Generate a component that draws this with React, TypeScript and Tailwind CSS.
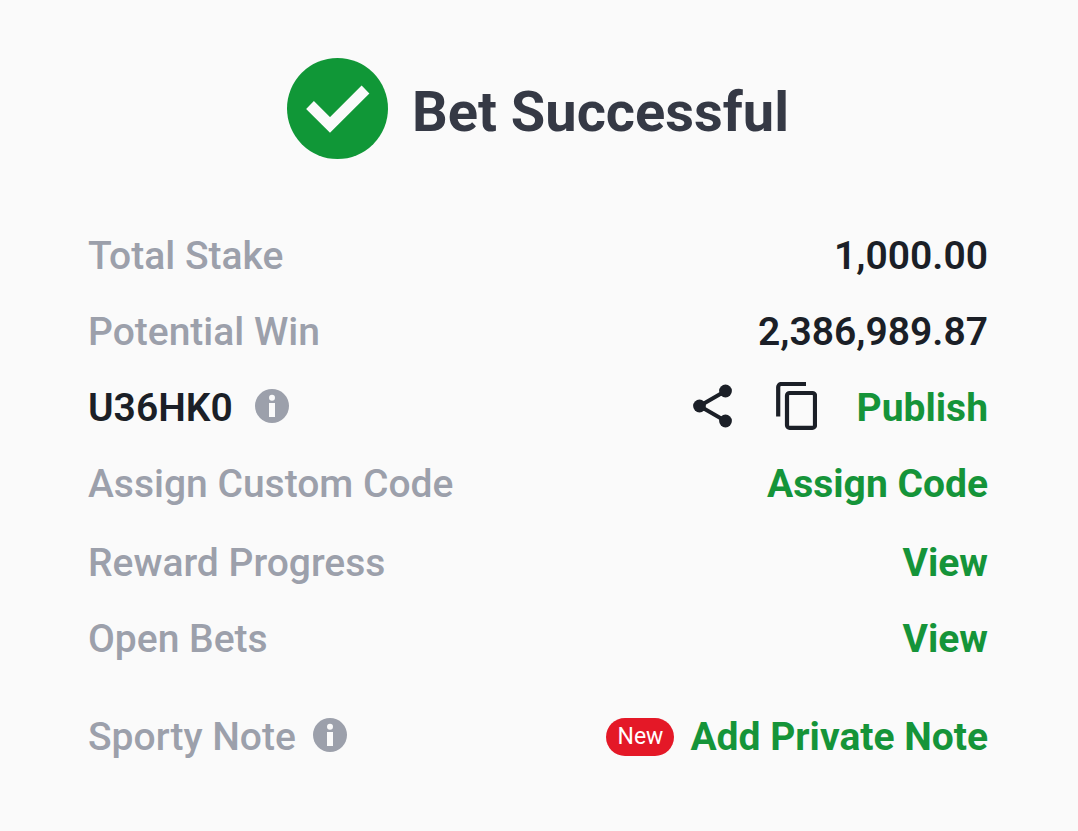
import type { ReactNode } from 'react';

function InfoIcon() {
  return (
    <svg viewBox="0 0 34 34" className="size-[34px] shrink-0" aria-hidden="true">
      <circle cx="17" cy="17" r="17" fill="#9ca0ab" />
      <circle cx="17" cy="8.7" r="3" fill="#fafafa" />
      <path d="M14 14h6v14h-6z" fill="#fafafa" />
    </svg>
  );
}

function ShareIcon() {
  return (
    <svg viewBox="0 0 39 44" className="h-11 w-[39px]" aria-hidden="true">
      <path d="M32.5 7 6.5 22l26 15" fill="none" stroke="#1b1f27" strokeWidth="4" />
      <circle cx="32.5" cy="7" r="6.4" fill="#1b1f27" />
      <circle cx="6.5" cy="22" r="6.4" fill="#1b1f27" />
      <circle cx="32.5" cy="37" r="6.4" fill="#1b1f27" />
    </svg>
  );
}

function CopyIcon() {
  return (
    <svg viewBox="0 0 41 48" className="h-12 w-[41px]" aria-hidden="true">
      <g fill="none" stroke="#1b1f27" strokeWidth="4.2">
        <path d="M2.2 34.5V5a3 3 0 0 1 3-3H30" />
        <rect x="11" y="11" width="28" height="34.8" rx="2.6" />
      </g>
    </svg>
  );
}

function Row({ label, children }: { label: ReactNode; children: ReactNode }) {
  return (
    <div className="flex h-19 items-center justify-between">
      <dt className="flex items-center text-[#9ca0ab]">{label}</dt>
      <dd className="flex items-center font-semibold text-[#1b1f27]">{children}</dd>
    </div>
  );
}

function Action({ children }: { children: ReactNode }) {
  return (
    <button type="button" className="font-bold text-[#159439]">
      {children}
    </button>
  );
}

export default function App() {
  return (
    <main className="min-h-screen bg-[#fafafa] pt-[58px] pr-[90px] pl-[88px] font-['Roboto',sans-serif] text-[39px] leading-[48px] font-medium">
      <header className="flex items-center justify-center gap-6">
        <svg viewBox="0 0 101 101" className="size-[101px]" aria-hidden="true">
          <circle cx="50.5" cy="50.5" r="50.5" fill="#109737" />
          <path d="M23 47 43 67 78.5 31.5" fill="none" stroke="#fafafa" strokeWidth="11" />
        </svg>
        <h1 className="pt-1.5 text-[56px] leading-[64px] font-bold text-[#353945]">Bet Successful</h1>
      </header>
      <dl className="mt-[59px]">
        <Row label="Total Stake">1,000.00</Row>
        <Row label="Potential Win">2,386,989.87</Row>
        <Row
          label={
            <>
              <span className="font-semibold text-[#1b1f27]">U36HK0</span>
              <button type="button" aria-label="About booking code" className="ml-[22px] pb-1">
                <InfoIcon />
              </button>
            </>
          }
        >
          <button type="button" aria-label="Share" className="pb-1">
            <ShareIcon />
          </button>
          <button type="button" aria-label="Copy" className="mr-10 ml-11 pb-1">
            <CopyIcon />
          </button>
          <Action>Publish</Action>
        </Row>
        <Row label="Assign Custom Code">
          <Action>Assign Code</Action>
        </Row>
        <div className="pt-[3px]">
          <Row label="Reward Progress">
            <Action>View</Action>
          </Row>
          <Row label="Open Bets">
            <Action>View</Action>
          </Row>
        </div>
        <div className="pt-[22px]">
          <Row
            label={
              <>
                Sporty Note
                <button type="button" aria-label="About notes" className="ml-[17px] pb-1">
                  <InfoIcon />
                </button>
              </>
            }
          >
            <span className="mr-4 rounded-full bg-[#e41827] px-[11px] text-[23px] leading-[38px] font-normal text-white">New</span>
            <Action>Add Private Note</Action>
          </Row>
        </div>
      </dl>
    </main>
  );
}
